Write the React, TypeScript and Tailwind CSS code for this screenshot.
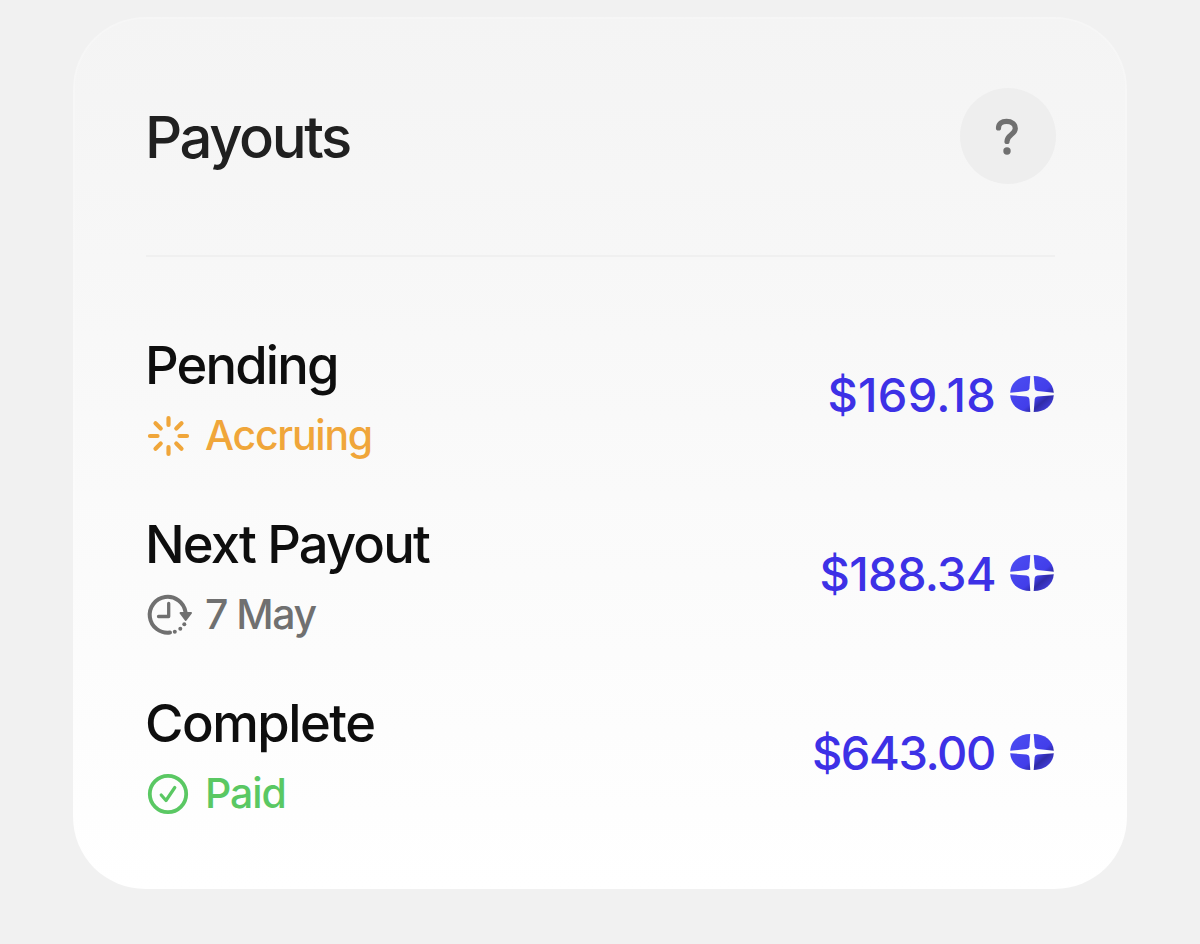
import type { ReactNode } from 'react';
import clsx from 'clsx';

interface Payout {
  id: string; title: string; titleClass: string;
  status: string; statusClass: string; icon: ReactNode;
  amount: string; amountClass: string;
}

const AccruingIcon = () => (
  <svg width="44" height="44" viewBox="0 0 44 44" fill="none" stroke="currentColor" strokeWidth="4.2" strokeLinecap="round">
    <path d="M22.5 4v7M22.5 33v7M4 22h7.500M33.500 22h7.500M9.500 9.200l5.200 5.200M30.300 29.600l5.200 5.200M35.500 9.200l-5.200 5.200M14.700 29.600l-5.200 5.200" />
  </svg>
);

const NextIcon = () => (
  <svg width="48" height="44" viewBox="0 0 48 44" fill="none" stroke="currentColor" strokeLinecap="round" strokeLinejoin="round">
    <path strokeWidth="4" d="M24 39.600A18 18 0 1 1 39.500 19" />
    <path strokeWidth="3.300" d="M22.700 10.500V23.500H12.500" />
    <path fill="currentColor" strokeWidth="2" d="M34.500 20H45L39.700 27Z" />
    <g fill="currentColor" stroke="none">
      <circle cx="28.800" cy="38.700" r="2" />
      <circle cx="34.300" cy="35.700" r="2" />
      <circle cx="38.300" cy="31.200" r="2" />
    </g>
  </svg>
);

const PaidIcon = () => (
  <svg width="44" height="44" viewBox="0 0 44 44" fill="none" stroke="currentColor" strokeLinecap="round" strokeLinejoin="round">
    <circle cx="22" cy="22" r="18.200" strokeWidth="3.800" />
    <path strokeWidth="3.200" d="M15.200 23l4.800 5.500 8.800-13" />
  </svg>
);

const CoinIcon = () => (
  <svg width="44" height="36" viewBox="0 0 44 36">
    <defs>
      <linearGradient id="coin" gradientUnits="userSpaceOnUse" x1="10" y1="2" x2="38" y2="34">
        <stop offset="0" stopColor="#4a4af0" />
        <stop offset="0.6" stopColor="#423eea" />
        <stop offset="0.77" stopColor="#302ba8" />
        <stop offset="1" stopColor="#4440e0" />
      </linearGradient>
    </defs>
    <g fill="url(#coin)">
      <path d="M20.300 0.100L19.400 12.500Q19.100 14.600 16.500 15L0.200 16.800C1 6.500 9 0.100 20.300 0.100Z" />
      <path d="M23.700 0.100L24.700 12.500Q25 14.600 27.500 15L43.800 16.800C43 6.500 35 0.100 23.700 0.100Z" />
      <path d="M20.300 35.900L19.400 23Q19.100 20.900 16.500 20.500L0.200 19.200C1 29.500 9 35.900 20.300 35.900Z" />
      <path d="M23.700 35.900L24.700 23Q25 20.900 27.500 20.500L43.800 19.200C43 29.500 35 35.900 23.700 35.900Z" />
    </g>
  </svg>
);

const PAYOUTS: Payout[] = [
  { id: '1', title: 'Pending', titleClass: 'tracking-[-1.85px]', status: 'Accruing', statusClass: 'text-[#f0a63a] tracking-[-1.25px]', icon: <AccruingIcon />, amount: '$169.18', amountClass: '-mr-px tracking-[0.2px]' },
  { id: '2', title: 'Next Payout', titleClass: 'tracking-[-1.85px]', status: '7 May', statusClass: 'text-[#707070] tracking-[-1.5px]', icon: <NextIcon />, amount: '$188.34', amountClass: '-mr-px tracking-[-0.7px]' },
  { id: '3', title: 'Complete', titleClass: 'tracking-[-1.5px]', status: 'Paid', statusClass: 'text-[#5ac863] tracking-[-1.1px]', icon: <PaidIcon />, amount: '$643.00', amountClass: 'tracking-[-1.4px]' },
];

const PayoutRow = ({ item }: { item: Payout }) => (
  <div className="flex h-[138px] items-center justify-between">
    <div>
      <div className={clsx('-ml-px text-[52.5px] leading-[80px] font-medium text-[#0e0e0e]', item.titleClass)}>{item.title}</div>
      <div className={clsx('flex h-[58px] items-center text-[41px] leading-[58px] font-medium', item.statusClass)}>
        <span className="flex w-[59px] shrink-0 pt-[3px]">{item.icon}</span>
        <span className="pt-[2px]">{item.status}</span>
      </div>
    </div>
    <div className="flex items-center gap-[15px] text-[#3d31e6]">
      <span className={clsx('pt-[2px] text-[47px] leading-[56px] font-medium', item.amountClass)}>{item.amount}</span>
      <CoinIcon />
    </div>
  </div>
);

const App = () => {
  return (
    <div className="h-[944px] bg-[#f1f1f1] px-[73px] pt-[17px] font-['Inter',sans-serif]">
      <main className="h-[872px] rounded-[72px] border-2 border-white/20 bg-linear-to-b from-[#f4f4f4] to-white bg-origin-border pt-[69px] pr-[71px] pl-[71px]">
        <header className="flex h-[96px] items-center justify-between">
          <h1 className="-ml-px pt-[2px] text-[58px] leading-[72px] font-medium tracking-[-2.4px] text-[#202020]">Payouts</h1>
          <button className="-mr-[2px] flex size-[96px] items-center justify-center rounded-full bg-[#eeeeee] text-[#707070]">
            <svg width="28" height="40" viewBox="0 0 28 40" fill="none" stroke="currentColor" strokeWidth="5.2" strokeLinecap="round" strokeLinejoin="round">
              <path d="M4.500 12C4.500 7.500 7.800 5.300 12.500 5.300C17.500 5.300 21.300 8 21.300 12.500C21.300 18.500 13 18.500 13 25.500" />
              <circle cx="13" cy="35" r="3.700" fill="currentColor" stroke="none" />
            </svg>
          </button>
        </header>
        <div className="mt-[71px] -mr-px h-[2px] bg-[#f0f0f0]" />
        <div className="mt-[68px] flex flex-col gap-[41px]">
          {PAYOUTS.map((item) => (
            <PayoutRow key={item.id} item={item} />
          ))}
        </div>
      </main>
    </div>
  );
};

export default App;
